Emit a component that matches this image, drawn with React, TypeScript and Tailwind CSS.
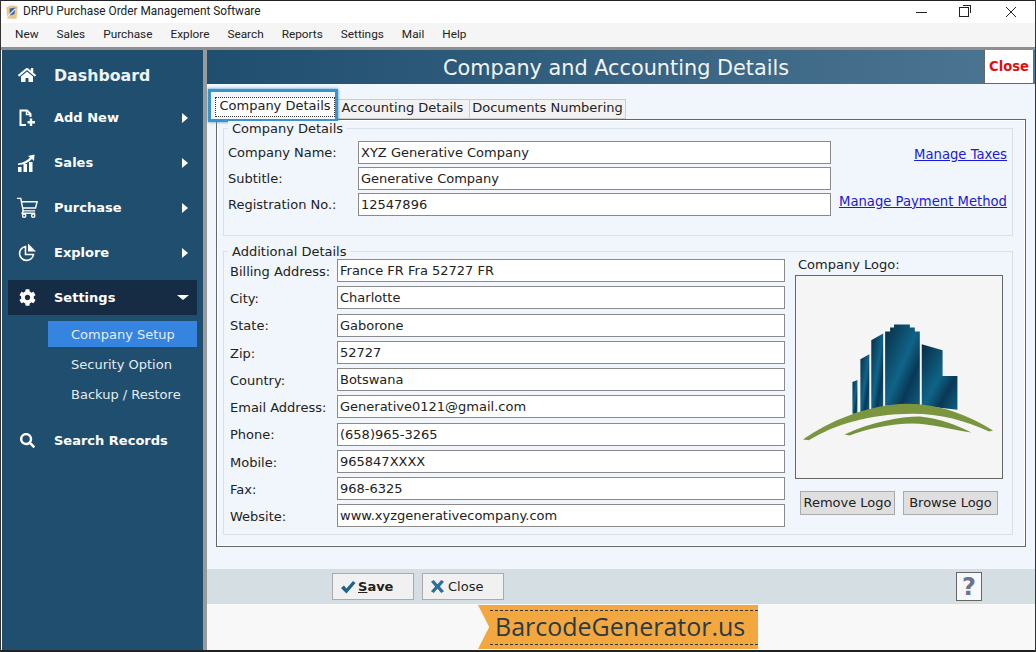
import type { ReactNode } from 'react'
import { FaCog, FaHome, FaSearch } from 'react-icons/fa'

const menus = ['New', 'Sales', 'Purchase', 'Explore', 'Search', 'Reports', 'Settings', 'Mail', 'Help']

const companyFields = [
  ['Company Name:', 'XYZ Generative Company'],
  ['Subtitle:', 'Generative Company'],
  ['Registration No.:', '12547896'],
]

const additionalFields = [
  ['Billing Address:', 'France FR Fra 52727 FR'],
  ['City:', 'Charlotte'],
  ['State:', 'Gaborone'],
  ['Zip:', '52727'],
  ['Country:', 'Botswana'],
  ['Email Address:', 'Generative0121@gmail.com'],
  ['Phone:', '(658)965-3265'],
  ['Mobile:', '965847XXXX'],
  ['Fax:', '968-6325'],
  ['Website:', 'www.xyzgenerativecompany.com'],
]

function AddNewIcon() {
  return (
    <svg viewBox="0 0 20 20" className="h-5 w-5" fill="none" stroke="white" strokeWidth="2">
      <path d="M9 17H3.5V2.5H10L13.5 6V9" />
      <path d="M9.5 2.5V6.5H13.5" strokeWidth="1.4" />
      <path d="M14 10.5V18M10.5 14.2H18" strokeWidth="2.4" />
    </svg>
  )
}

function SalesIcon() {
  return (
    <svg viewBox="0 0 20 20" className="h-5 w-5" fill="white">
      <rect x="1" y="14" width="3.5" height="5" />
      <rect x="6.5" y="11" width="3.5" height="8" />
      <rect x="12" y="9" width="3.5" height="10" />
      <path d="M1 10.5C6 10 10 7.5 13 4.5L11 3L17.5 1.5L17 8L15 6C12 9 7 12 1 12Z" />
    </svg>
  )
}

function CartIcon() {
  return (
    <svg viewBox="0 0 24 24" className="h-[23px] w-[23px]" fill="none" stroke="white" strokeWidth="1.5">
      <path d="M1 2.5H5L7.5 15.5H20" />
      <path d="M5.6 6H22L20.4 12.5H6.8" />
      <path d="M7.5 15.5L6.5 18H20" />
      <circle cx="8.5" cy="20.5" r="1.7" />
      <circle cx="18" cy="20.5" r="1.7" />
    </svg>
  )
}

function ExploreIcon() {
  return (
    <svg viewBox="0 0 20 20" className="h-5 w-5" fill="none" stroke="white" strokeWidth="1.6">
      <path d="M8.5 3.5A7 7 0 1 0 16.5 11.5H8.5Z" />
      <path d="M11 0.5L19 8.5H11Z" fill="white" stroke="none" />
    </svg>
  )
}

function NavItem({ icon, label, open, active }: { icon: ReactNode; label: string; open?: boolean; active?: boolean }) {
  return (
    <div className={`flex h-[35px] items-center ${active ? 'bg-[#152c44]' : ''}`}>
      <span className="flex w-[46px] justify-center pr-[8px]">{icon}</span>
      <span className="flex-1 text-[13px] font-bold text-white">{label}</span>
      {open === true && <span className="mr-[8px] h-0 w-0 border-x-[6px] border-t-[5px] border-x-transparent border-t-white" />}
      {open === false && <span className="mr-[9px] h-0 w-0 border-y-[5px] border-l-[6px] border-y-transparent border-l-white" />}
    </div>
  )
}

function Sidebar() {
  return (
    <aside className="flex w-[201px] shrink-0 flex-col bg-[#1f4e6f] px-[6px] pt-[7px]">
      <div className="flex h-[36px] items-center">
        <span className="flex w-[46px] justify-center pr-[8px]"><FaHome className="h-[18px] w-[18px] text-white" /></span>
        <span className="pt-[1px] text-[15.8px] font-bold text-[#eef3f6]">Dashboard</span>
      </div>
      <div className="mt-[7px] flex flex-col gap-[10px]">
        <NavItem icon={<AddNewIcon />} label="Add New" open={false} />
        <NavItem icon={<SalesIcon />} label="Sales" open={false} />
        <NavItem icon={<CartIcon />} label="Purchase" open={false} />
        <NavItem icon={<ExploreIcon />} label="Explore" open={false} />
        <NavItem icon={<FaCog className="h-[17px] w-[17px] text-white" />} label="Settings" open active />
      </div>
      <div className="mt-[6px] ml-[40px] flex flex-col text-[13px] text-[#e4ecf1]">
        <div className="flex h-[26px] items-center bg-[#3584e0] pl-[23px] pt-[2px]">Company Setup</div>
        <div className="mt-[5px] flex h-[26px] items-center pl-[23px]">Security Option</div>
        <div className="mt-[4px] flex h-[26px] items-center pl-[23px]">Backup / Restore</div>
      </div>
      <div className="mt-[15px]">
        <NavItem icon={<FaSearch className="h-[15px] w-[15px] text-white" />} label="Search Records" />
      </div>
    </aside>
  )
}

function TextBox({ value, className }: { value: string; className: string }) {
  return (
    <input
      readOnly
      value={value}
      className={`h-[23px] border border-[#8a8a8a] bg-white px-[2px] text-[13px] text-[#222] outline-none ${className}`}
    />
  )
}

function Group({ title, className, children }: { title: string; className: string; children: ReactNode }) {
  return (
    <fieldset className={`relative border border-[#d8e1ea] ${className}`}>
      <span className="absolute -top-[8px] left-[4px] bg-[#f1f6fc] px-[4px] text-[13px] leading-[15px] text-[#222]">{title}</span>
      {children}
    </fieldset>
  )
}

function LogoArt() {
  return (
    <svg viewBox="0 0 208 204" className="h-full w-full">
      <defs>
        <linearGradient id="tower" x1="0" y1="0" x2="1" y2="1">
          <stop offset="0" stopColor="#0a2c44" />
          <stop offset="0.5" stopColor="#0f6488" />
          <stop offset="0.72" stopColor="#0a3857" />
          <stop offset="1" stopColor="#0e5f80" />
        </linearGradient>
      </defs>
      <g fill="url(#tower)">
        <path d="M57 107L62 105V139H57Z" />
        <path d="M65 84L74 79V136L65 138Z" />
        <path d="M76 65L88 58V134L76 136Z" />
        <path d="M90 56H95V52H99V49H115V52H120V56H125V131H90Z" />
        <path d="M127 69L148 75V101H163V135L127 131Z" />
      </g>
      <path
        d="M7 165C35 146 72 130 112 129C145 129 175 141 199 156L195 157C172 146 145 139 118 139C75 139 38 150 13 166Z"
        fill="#7c9640"
      />
      <path d="M49 160C75 148 105 142 125 142C145 144 163 151 177 158C155 155 135 149 118 149C95 149 70 155 54 161Z" fill="#76923c" />
    </svg>
  )
}

function CompanyForm() {
  return (
    <div className="flex h-[428px] flex-col border border-[#666] pl-[6px] pr-[12px] pt-[8px] shadow-[inset_0_0_0_1px_#fff]">
      <Group title="Company Details" className="h-[108px]">
        <div className="flex pt-[12px]">
          <div className="flex flex-col gap-[3px] pl-[4px]">
            {companyFields.map(([label, value]) => (
              <div key={label} className="flex items-center">
                <span className="w-[130px] text-[13px] text-[#222]">{label}</span>
                <TextBox value={value} className="w-[473px]" />
              </div>
            ))}
          </div>
          <div className="flex flex-1 flex-col items-end pr-[5px] pt-[4px] text-[13.2px] text-[#1a1ad6] underline">
            <span>Manage Taxes</span>
            <span className="mt-[27px]">Manage Payment Method</span>
          </div>
        </div>
      </Group>
      <Group title="Additional Details" className="mt-[15px] h-[284px]">
        <div className="flex pt-[5px]">
          <div className="flex flex-col pl-[6px]">
            {additionalFields.map(([label, value]) => (
              <div key={label} className="flex h-[27.25px] items-center">
                <span className="w-[107px] pt-[2px] text-[13px] text-[#222]">{label}</span>
                <TextBox value={value} className="w-[448px]" />
              </div>
            ))}
          </div>
          <div className="ml-[10px] flex w-[208px] flex-col">
            <span className="pl-[3px] text-[13px] leading-[15px] text-[#222]">Company Logo:</span>
            <div className="mt-[3px] h-[204px] border border-[#666] bg-[#f5f5f5]">
              <LogoArt />
            </div>
            <div className="mt-[12px] flex gap-[8px] pl-[5px]">
              <button className="h-[24px] w-[95px] border border-[#aaa] bg-[#dfdfdf] text-[13px] text-[#222]">Remove Logo</button>
              <button className="h-[24px] w-[95px] border border-[#aaa] bg-[#dfdfdf] text-[13px] text-[#222]">Browse Logo</button>
            </div>
          </div>
        </div>
      </Group>
    </div>
  )
}

function Tabs() {
  return (
    <div className="relative -ml-[1px] flex h-[22px] items-end text-[13px] text-[#222]">
      <div className="mb-[2px] flex h-[20px] w-[120px] items-center justify-center border border-dotted border-[#333] bg-white pb-[2px]">Company Details</div>
      <div className="flex h-[20px] w-[135px] items-center justify-center border border-[#ccc] bg-[#f2f2f2] pb-[3px]">Accounting Details</div>
      <div className="flex h-[20px] w-[156px] items-center justify-center border border-l-0 border-[#ccc] bg-[#f2f2f2] pb-[3px]">Documents Numbering</div>
      <div className="absolute -left-[7px] -top-[8px] h-[33px] w-[130px] border-[3px] border-[#3c93c9] shadow-[0_0_3px_#3c93c9]" />
    </div>
  )
}

export default function App() {
  return (
    <div className="flex h-[652px] w-[1036px] flex-col overflow-hidden border-x border-[#333] bg-white font-['DejaVu_Sans',sans-serif]">
      <div className="flex h-[23px] shrink-0 items-center border-t border-[#222] pl-[3px] text-[#222]">
        <svg viewBox="0 0 14 14" className="h-[16px] w-[16px]">
          <path d="M2 3L6 1L12 2L11 13H3Z" fill="#e8c98a" />
          <path d="M5 4L10 3L9 9L5 10Z" fill="#3d5ea8" />
          <path d="M3 11L10 4" stroke="#fff" strokeWidth="1" />
        </svg>
        <span className="ml-[3px] font-['Roboto',sans-serif] text-[11.85px]">DRPU Purchase Order Management Software</span>
        <div className="ml-auto flex items-center text-[#222]">
          <span className="h-px w-[11px] bg-[#222]" />
          <span className="relative ml-[32px] h-[10px] w-[10px] border border-[#222]">
            <span className="absolute -right-[3px] -top-[3px] h-[8px] w-[8px] border-r border-t border-[#222]" />
          </span>
          <svg viewBox="0 0 12 12" className="ml-[36px] mr-[18px] h-[12px] w-[12px]" stroke="#222" strokeWidth="1">
            <path d="M1 1L11 11M11 1L1 11" />
          </svg>
        </div>
      </div>
      <div className="flex h-[24px] shrink-0 items-center gap-[18px] bg-[#f5f5f5] pl-[14px] font-['Roboto',sans-serif] text-[11.8px] text-[#222]">
        {menus.map((menu) => (
          <span key={menu}>{menu}</span>
        ))}
      </div>
      <div className="flex min-h-0 flex-1 border-y-[3px] border-[#8f8f8f] border-b-[#222] border-b-[2px] pl-[1px]">
        <Sidebar />
        <div className="w-[4px] shrink-0 bg-[#9a9a9a]" />
        <main className="flex min-w-0 flex-1 flex-col bg-[#f8f8f8]">
          <header className="flex h-[34px] shrink-0 items-center bg-gradient-to-r from-[#1f4e6f] to-[#4d7693]">
            <h1 className="flex-1 pl-[41px] pt-[2px] text-center text-[20.8px] leading-[34px] text-[#f2f5f7]">Company and Accounting Details</h1>
            <div className="mr-[2px] flex h-[34px] w-[49px] items-center justify-center border-b border-l border-[#666] bg-white text-[13.2px] font-bold text-[#e01010]">Close</div>
          </header>
          <div className="h-[485px] shrink-0 bg-[#f1f6fc] pl-[9px] pr-[9px] pt-[13px]">
            <Tabs />
            <CompanyForm />
          </div>
          <div className="flex h-[35px] shrink-0 items-center bg-[#d5dee3] pl-[125px]">
            <button className="flex h-[27px] w-[82px] items-center border border-[#aaa] bg-[#f1f1f1] pl-[7px] text-[13px] font-bold text-[#222]">
              <svg viewBox="0 0 16 16" className="mr-[2px] h-[16px] w-[16px]" fill="#1f628c">
                <path d="M1 9L4 6.5L6.5 9.5L13 2L15.5 4L6.5 14.5Z" />
              </svg>
              <span><span className="underline">S</span>ave</span>
            </button>
            <button className="ml-[8px] flex h-[27px] w-[82px] items-center border border-[#aaa] bg-[#f1f1f1] pl-[7px] text-[13px] text-[#222]">
              <svg viewBox="0 0 16 16" className="mr-[3px] h-[15px] w-[15px]" fill="#2a6f9c">
                <path d="M1 3L4 1L8 5.5L12 1L15 3L10.5 8L15 13L12 15L8 10.5L4 15L1 13L5.5 8Z" />
              </svg>
              Close
            </button>
            <div className="ml-[452px] flex h-[29px] w-[26px] items-center justify-center border border-[#666] bg-[#f7f8fa] text-[24px] font-bold leading-none text-[#6b7390]">?</div>
          </div>
          <div className="flex flex-1 justify-start pl-[271px] pt-[1px]">
            <div className="flex h-[44px] w-[280px] items-center bg-[#f2a73f] pl-[12px] font-['Open_Sans',sans-serif] text-[25px] text-[#2d3a44] [clip-path:polygon(0_0,100%_0,100%_100%,0_100%,4%_50%)]">
              <div className="flex h-[35px] w-full items-center border-y border-dashed border-[#333] pl-[5px]">BarcodeGenerator.us</div>
            </div>
          </div>
        </main>
      </div>
    </div>
  )
}
